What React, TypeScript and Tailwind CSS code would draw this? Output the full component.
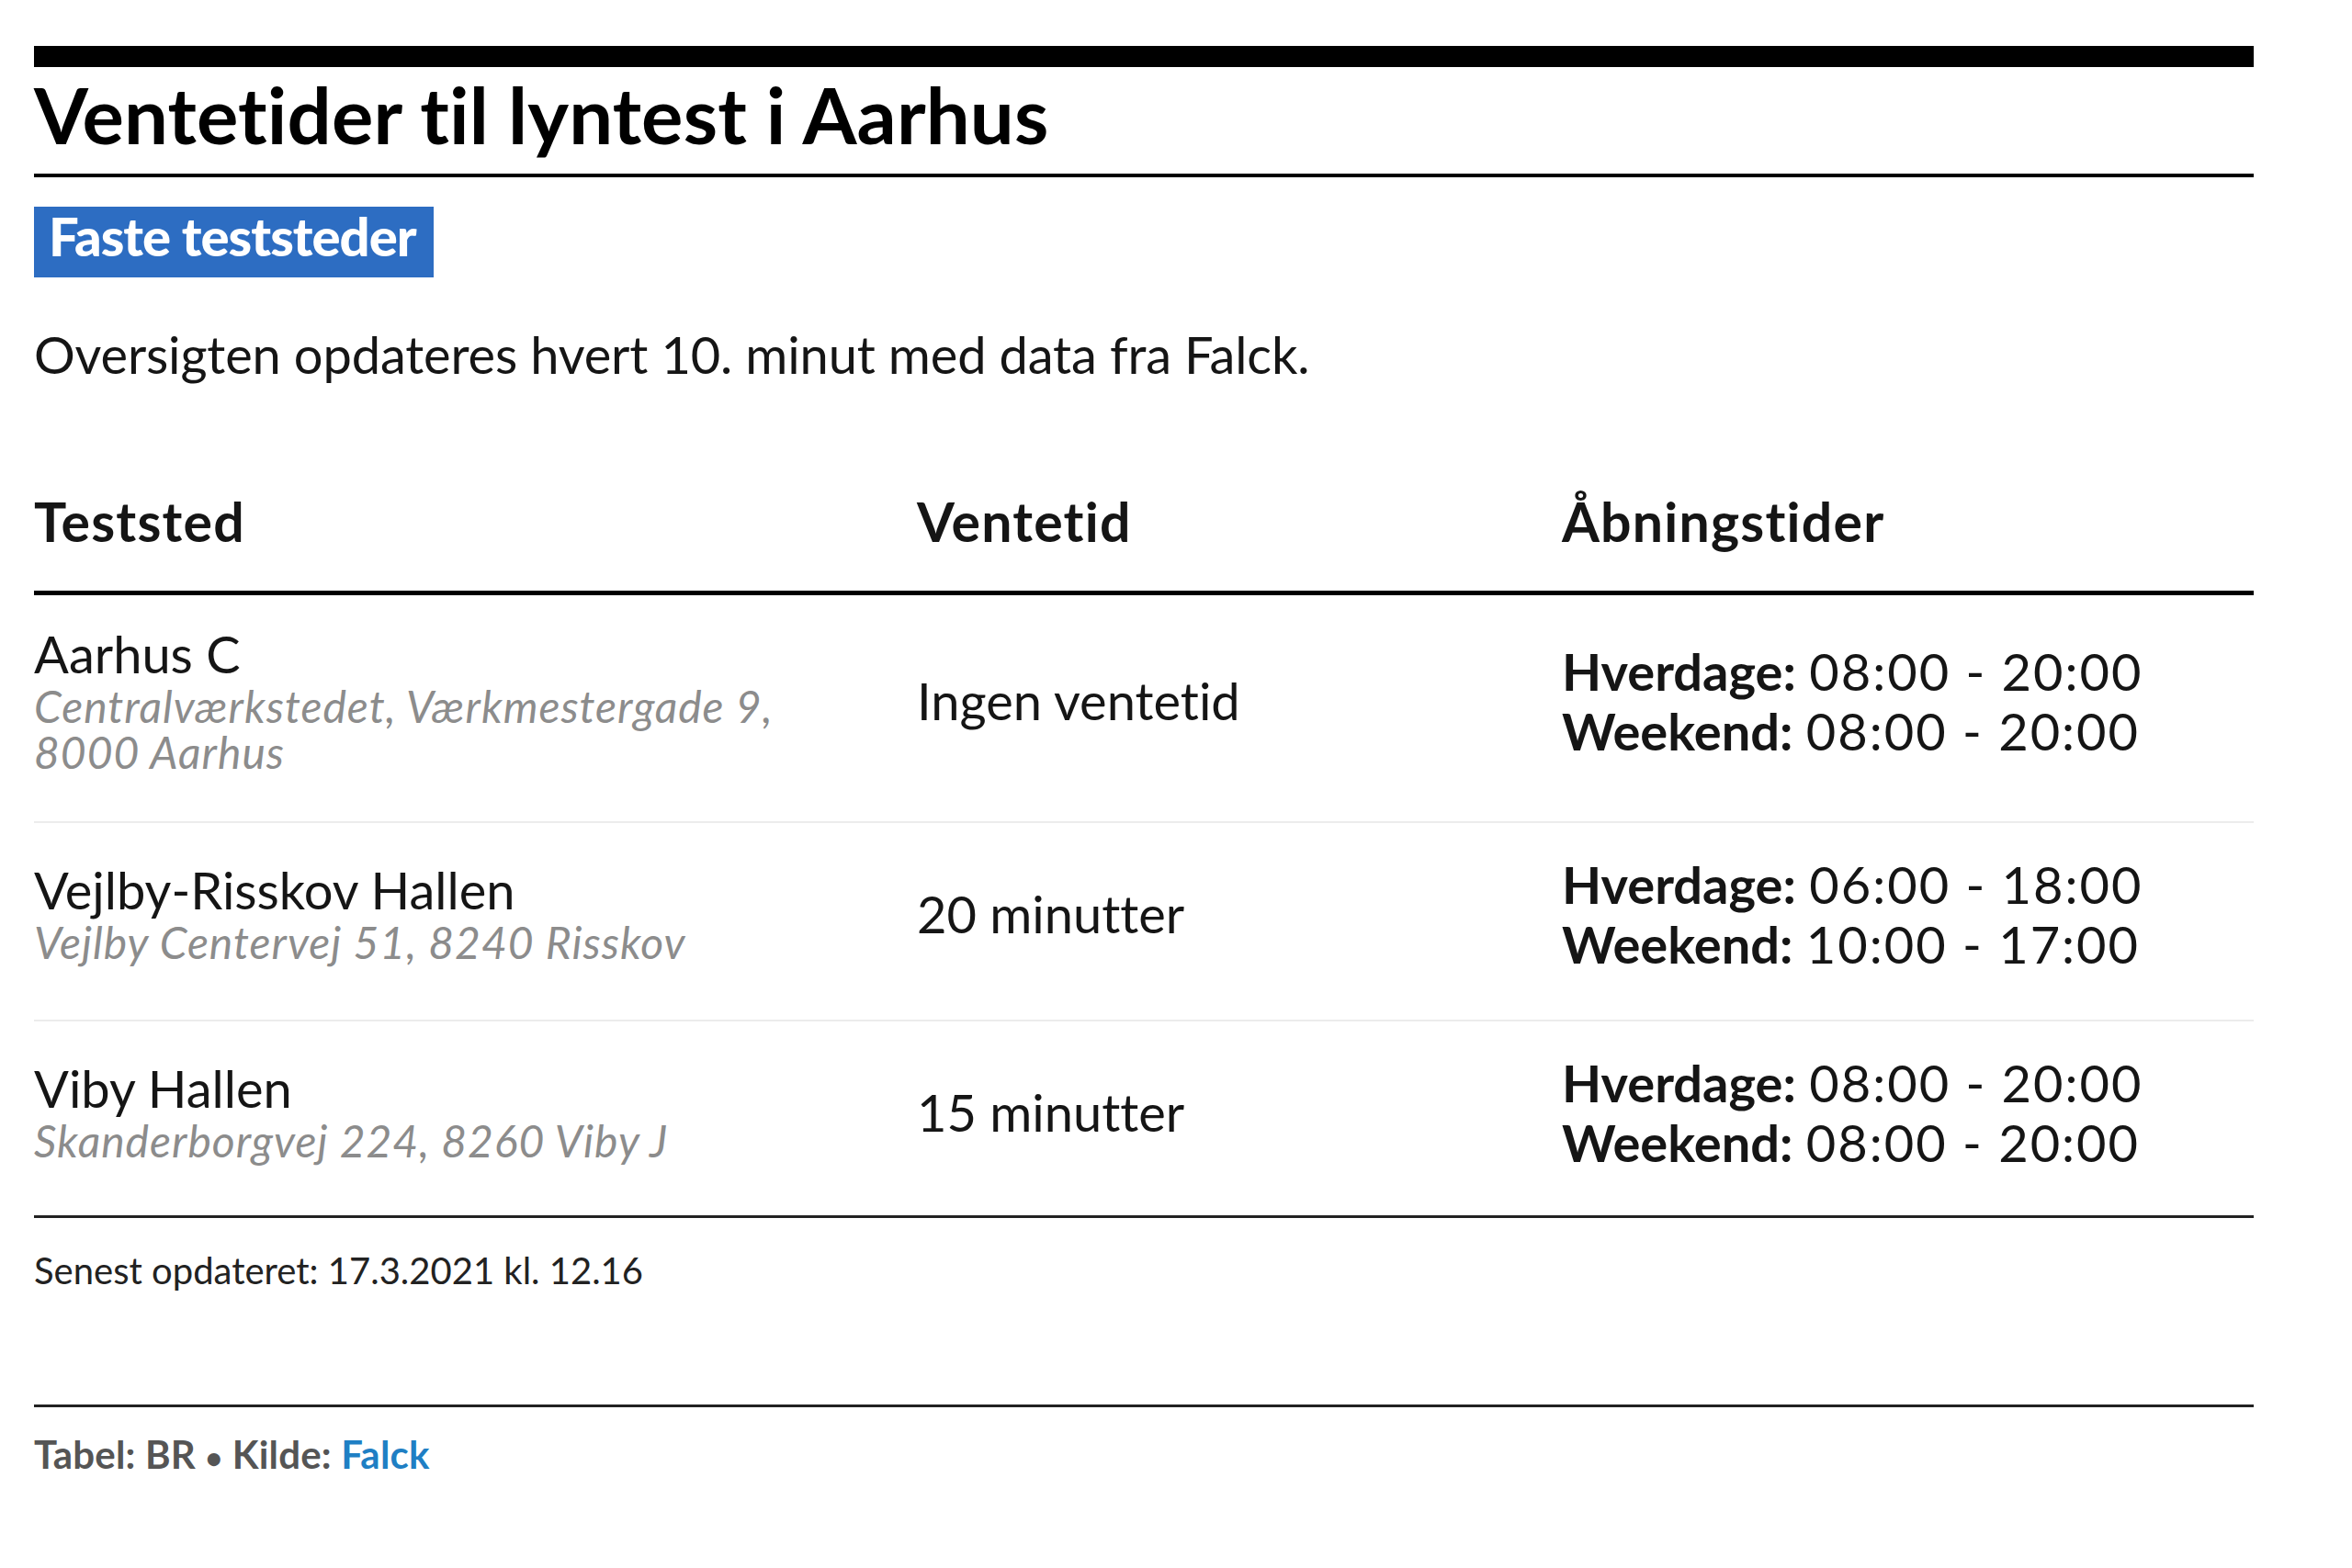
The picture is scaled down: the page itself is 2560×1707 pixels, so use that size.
type Site = {
  name: string;
  address: string;
  wait: string;
  weekdays: string;
  weekend: string;
};

const sites: Site[] = [
  {
    name: "Aarhus C",
    address: "Centralværkstedet, Værkmestergade 9, 8000 Aarhus",
    wait: "Ingen ventetid",
    weekdays: "08:00 - 20:00",
    weekend: "08:00 - 20:00",
  },
  {
    name: "Vejlby-Risskov Hallen",
    address: "Vejlby Centervej 51, 8240 Risskov",
    wait: "20 minutter",
    weekdays: "06:00 - 18:00",
    weekend: "10:00 - 17:00",
  },
  {
    name: "Viby Hallen",
    address: "Skanderborgvej 224, 8260 Viby J",
    wait: "15 minutter",
    weekdays: "08:00 - 20:00",
    weekend: "08:00 - 20:00",
  },
];

const cols = "grid grid-cols-[961px_702px_1fr]";

export default function App() {
  return (
    <div className="min-h-screen bg-white font-['Lato',_sans-serif] text-[#151515] [font-variant-ligatures:none]">
      <div className="w-[2416px] ml-[37px] pt-[50px]">
        <div className="h-[23px] bg-black" />

        <h1 className="mt-[9px] pb-[22px] border-b-4 border-black text-[85px] leading-[85px] font-bold tracking-[0.15px] text-black">
          Ventetider til lyntest i Aarhus
        </h1>

        <div className="mt-[32px] inline-block bg-[#2d6dc2] pl-4 pr-[19px] pt-[3px] pb-[16px] text-[58px] leading-[58px] font-black tracking-[-1px] text-white">
          Faste teststeder
        </div>

        <p className="mt-[56px] text-[56px] leading-[56px] tracking-[-0.15px]">
          Oversigten opdateres hvert 10. minut med data fra Falck.
        </p>

        <div className={`${cols} mt-[125px] pb-[46px] border-b-[5px] border-black text-[59px] leading-[58px] font-bold tracking-[1.2px]`}>
          <div>Teststed</div>
          <div>Ventetid</div>
          <div>Åbningstider</div>
        </div>

        {sites.map((site, i) => {
          const last = i === sites.length - 1;
          return (
            <div
              key={site.name}
              className={`${cols} items-center pt-[34px] ${
                last ? "pb-[47px] border-b-[3px] border-[#222]" : "pb-[50px] border-b-2 border-[#ececec]"
              }`}>
              <div>
                <div className="text-[56px] leading-[60px]">{site.name}</div>
                <p className="mt-[2px] w-[880px] text-[48px] leading-[50px] italic tracking-[1px] text-[#8c8c8c]">
                  {site.address}
                </p>
              </div>
              <div className="text-[56px] leading-[60px]">{site.wait}</div>
              <div className="text-[56px] leading-[65px]">
                <div>
                  <span className="font-bold">Hverdage:</span>{" "}
                  <span className="tracking-[2px]">{site.weekdays}</span>
                </div>
                <div>
                  <span className="font-bold">Weekend:</span>{" "}
                  <span className="tracking-[2px]">{site.weekend}</span>
                </div>
              </div>
            </div>
          );
        })}

        <p className="mt-[37px] pb-[126px] border-b-[3px] border-[#222] text-[40px] leading-[40px] text-[#222]">
          Senest opdateret: 17.3.2021 kl. 12.16
        </p>

        <p className="mt-[31px] text-[42px] leading-[40px] font-bold tracking-[0.2px] text-[#555]">
          Tabel: BR <span className="text-[32px]">•</span> Kilde: <span className="text-[#1f7fc4]">Falck</span>
        </p>
      </div>
    </div>
  );
}
